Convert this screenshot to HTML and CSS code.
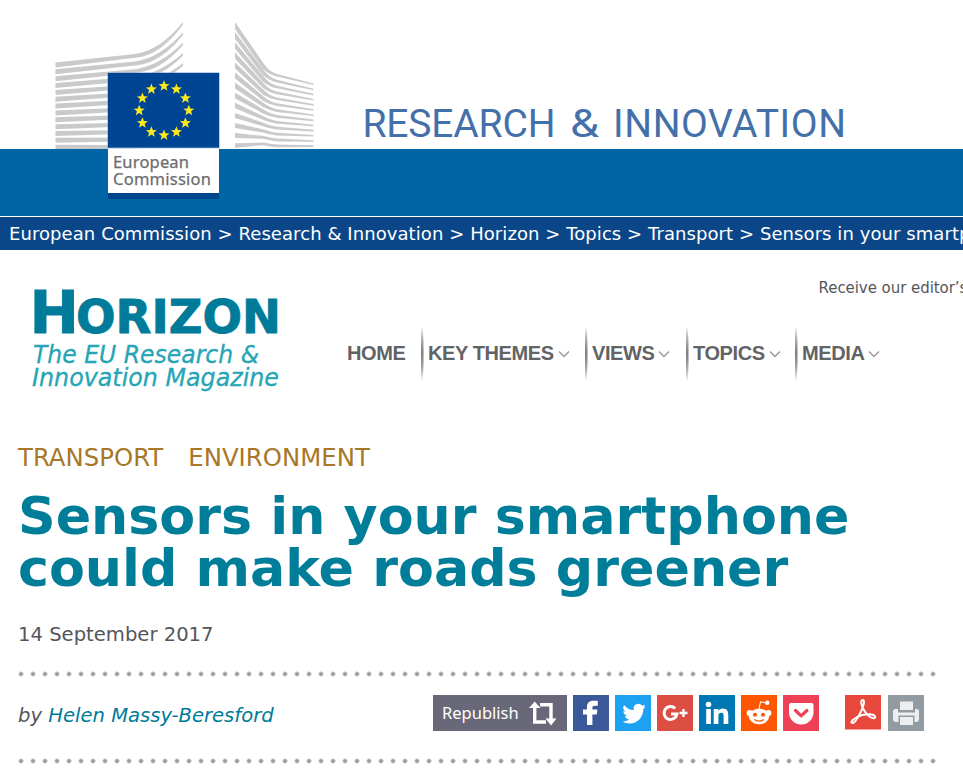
FILE: index.html
```html
<!DOCTYPE html>
<html lang="en">
<head>
<meta charset="utf-8">
<title>Sensors in your smartphone could make roads greener | Horizon</title>
<link rel="stylesheet" href="styles.css">
</head>
<body>
<header class="banner">
  <svg class="banner-art" width="963" height="216" viewBox="0 0 963 216">
    <defs><path id="star" d="M0-5.800 1.500-1.900 5.500-1.800 2.300.8 3.400 4.700 0 2.400-3.400 4.700-2.300.8-5.500-1.800-1.500-1.900Z"/></defs>
    <g id="building" fill="#c9cacb"></g>
    <rect y="149" width="963" height="67" fill="#0065a4"/>
    <rect x="108" y="180" width="111" height="19" fill="#00468f"/>
    <rect x="107.500" y="72.500" width="112" height="76" fill="#7f9fcb"/>
    <rect x="108" y="73" width="111" height="74.500" fill="#004494"/>
    <rect x="108" y="148.500" width="111" height="44.500" fill="#fff"/>
    <g fill="#fbe91c">
      <use href="#star" x="164" y="86"/><use href="#star" x="176.400" y="89.200"/><use href="#star" x="185.400" y="98.200"/>
      <use href="#star" x="188.800" y="110.500"/><use href="#star" x="185.400" y="123"/><use href="#star" x="176.400" y="132"/>
      <use href="#star" x="164" y="135.200"/><use href="#star" x="151.400" y="132"/><use href="#star" x="142.400" y="123"/>
      <use href="#star" x="139.200" y="110.500"/><use href="#star" x="142.400" y="98.200"/><use href="#star" x="151.400" y="89.200"/>
    </g>
    <g class="ec-name">
      <text x="113" y="168" textLength="76">European</text>
      <text x="113" y="184.500" textLength="98">Commission</text>
    </g>
    <g class="dg-name">
      <text x="362.500" y="136.500" textLength="193">RESEARCH</text>
      <text x="570" y="136.500" textLength="29" lengthAdjust="spacingAndGlyphs">&amp;</text>
      <text x="613" y="136.500" textLength="233">INNOVATION</text>
    </g>
  </svg>
</header>
<nav class="crumbs">European Commission &gt; Research &amp; Innovation &gt; Horizon &gt; Topics &gt; Transport &gt; Sensors in your smartphone</nav>
<section class="masthead">
  <svg class="logo" width="290" height="120" viewBox="0 0 290 120">
    <g class="logo-title"><text x="29.500" y="68" class="big">H</text><text x="76" y="68" textLength="205" lengthAdjust="spacingAndGlyphs">ORIZON</text></g>
    <g class="logo-sub">
      <text x="33" y="98" textLength="226" lengthAdjust="spacingAndGlyphs">The EU Research &amp;</text>
      <text x="32" y="121" textLength="247" lengthAdjust="spacingAndGlyphs">Innovation Magazine</text>
    </g>
  </svg>
  <div class="masthead-right">
    <p class="newsletter">Receive our editor’s</p>
    <ul class="menu">
      <li class="home">HOME</li>
      <li class="themes">KEY THEMES<svg class="chev" viewBox="0 0 12 8"><path d="M1 1.500 6 6.500 11 1.500"/></svg></li>
      <li class="views">VIEWS<svg class="chev" viewBox="0 0 12 8"><path d="M1 1.500 6 6.500 11 1.500"/></svg></li>
      <li class="topics">TOPICS<svg class="chev" viewBox="0 0 12 8"><path d="M1 1.500 6 6.500 11 1.500"/></svg></li>
      <li>MEDIA<svg class="chev" viewBox="0 0 12 8"><path d="M1 1.500 6 6.500 11 1.500"/></svg></li>
    </ul>
  </div>
</section>
<main class="article">
  <div class="tags"><span>TRANSPORT</span><span>ENVIRONMENT</span></div>
  <h1>Sensors in your smartphone<br>could make roads greener</h1>
  <p class="date">14 September 2017</p>
  <div class="dots"></div>
  <div class="byline">
    <p class="author">by <a>Helen Massy-Beresford</a></p>
    <div class="share">
      <div class="republish"><span>Republish</span>
        <svg width="28" height="25" viewBox="0 0 28 25"><g fill="none" stroke="#fff" stroke-width="3.400"><path d="M5.700 6V21H17"/><path d="M11 3.700H22V19"/></g><path fill="#fff" d="M0 7 5.700.500 11.500 7ZM16.500 17.500H27.500L22 24.500Z"/></svg>
      </div>
      <svg class="tile" viewBox="0 0 36 36"><path fill="#3b5998" d="M0 0h36v36H0z"/><path fill="#fff" d="M14 30V19.500h-4V14.500h4v-2.800C14 8 16.300 5.800 20 5.800h4.800v5h-3c-1.800 0-2.400.7-2.400 2.200v1.500h5l-.6 5h-4.400V30z"/></svg>
      <svg class="tile" viewBox="0 0 36 36"><path fill="#1da1f2" d="M0 0h36v36H0z"/><path fill="#fff" transform="translate(7.200 6.500) scale(.97 1)" d="M24.200 4.800c-.9.400-1.800.6-2.800.8 1-.6 1.800-1.600 2.200-2.700-1 .5-2 1-3.100 1.200A4.900 4.900 0 0 0 12 8.600C7.900 8.400 4.300 6.400 1.900 3.400a5 5 0 0 0 1.500 6.600c-.8 0-1.600-.3-2.200-.6 0 2.300 1.600 4.400 3.900 4.900-.7.200-1.500.2-2.200.1a4.900 4.900 0 0 0 4.600 3.400A10 10 0 0 1 .2 19.800c2.200 1.400 4.800 2.200 7.500 2.200 9.100 0 14.300-7.700 14-14.600 1-.7 1.800-1.600 2.500-2.600z"/></svg>
      <svg class="tile" viewBox="0 0 36 36"><path fill="#dc4e41" d="M0 0h36v36H0z"/><path fill="none" stroke="#fff" stroke-width="2.900" d="M18.200 13.400A6.500 6.500 0 1 0 20 19H14"/><path stroke="#fff" stroke-width="2.300" d="M22.500 18h8M26.500 14v8"/></svg>
      <svg class="tile" viewBox="0 0 36 36"><path fill="#0077b5" d="M0 0h36v36H0z"/><circle cx="9.500" cy="9.500" r="2.800" fill="#fff"/><path fill="#fff" d="M7.200 14h4.700v15H7.200zM14.700 14h4.500v2.100c.8-1.500 2.400-2.500 4.600-2.500 4.400 0 5.500 2.800 5.500 7V29h-4.700v-7.500c0-2 0-3.800-2.400-3.800s-2.800 1.700-2.800 3.700V29h-4.700z"/></svg>
      <svg class="tile" viewBox="0 0 36 36"><path fill="#ff5700" d="M0 0h36v36H0z"/><g fill="#fff"><ellipse cx="18" cy="21.500" rx="10.200" ry="7.700"/><circle cx="8.600" cy="18" r="3"/><circle cx="27.400" cy="18" r="3"/><circle cx="26.200" cy="7.700" r="2.300"/></g><path d="m18 14 1.500-7.200 5 1" fill="none" stroke="#fff" stroke-width="1.100"/><circle cx="14" cy="19.700" r="2" fill="#ff5700"/><circle cx="22" cy="19.700" r="2" fill="#ff5700"/><path d="M13.200 24.500q4.800 3.200 9.600 0" fill="none" stroke="#ff5700" stroke-width="1.300"/></svg>
      <svg class="tile" viewBox="0 0 36 36"><path fill="#ee4056" d="M0 0h36v36H0z"/><path fill="#fff" d="M8 8h20.500c1.300 0 2 .8 2 2v7.300a12.200 12.200 0 0 1-24.500 0V10c0-1.200.8-2 2-2z"/><path d="m12.500 15.500 5.700 5.300 5.700-5.300" fill="none" stroke="#ee4056" stroke-width="3.200" stroke-linecap="round" stroke-linejoin="round"/></svg>
      <svg class="tile pdf" viewBox="0 0 36 36"><path fill="#e9493c" d="M0 0h36v34H0z"/><path fill="#f3a39c" d="M0 34h36v1H0z"/><path d="M17.800 5c-2.800 0-1.400 5.500.8 9.500 2.200 4 6.500 8.800 9.700 8.800 3.500 0 2.300-4-4-4-5.500 0-10 1.500-13 3.200-3.300 1.800-5.600 4-4.600 5.200 1.600 1.800 5.200-3.200 8.300-9.200C18.500 12 20.400 5 17.800 5z" fill="none" stroke="#fff" stroke-width="2"/></svg>
      <svg class="tile print" viewBox="0 0 36 36"><path fill="#929ba1" d="M0 0h36v36H0z"/><g fill="#eceeef"><path d="M12 6.500h13v8.500H12zM5 16.500q0-2.500 2.500-2.500h2.500V17.500h17V14h1.500q2.500 0 2.500 2.500V24q0 3-3 3h-1.500v-6.500h-16V27H8q-3 0-3-3z"/><path d="M12 22h13v8H12z"/></g></svg>
    </div>
  </div>
  <div class="dots"></div>
</main>
<script src="building.js"></script>
</body>
</html>
```
FILE: building.js
```js
// Sweeping facade lines on both sides of the flag.
const building = document.getElementById('building');
function band(d) {
  const path = document.createElementNS('http://www.w3.org/2000/svg', 'path');
  path.setAttribute('d', d);
  building.appendChild(path);
}
for (let i = 0; i < 13; i++) {
  const l = 62.5 + i * 6.85, m = 54 + i * 7.6, r = 22 + i * 10.3;
  band(`M55.500 ${l}L${135} ${m}Q160 ${m - 3.5} 183 ${r}V${r + 2.6}Q161 ${m + 1} 137 ${m + 3.6}L55.500 ${l + 5}Z`);
}
for (let i = 0; i < 13; i++) {
  const l = 22 + i * 10.1, k = 71 + i * 6.05, r = 83.5 + i * 5.15;
  band(`M235 ${l}L264 ${k - 7 + i * 0.5}Q270 ${k + 1 - i * 0.05} 277 ${k + 3 - i * 0.18}L313.500 ${r}V${r + 1.6}L277 ${k + 5.5 - i * 0.15}Q270 ${k + 4.2 - i * 0.1} 263 ${k - 2 + i * 0.3}L235 ${l + 7 - i * 0.2}Z`);
}
```
FILE: styles.css
```css
* { box-sizing: border-box; }
body { margin: 0; background: #fff; overflow: hidden; font-family: "DejaVu Sans", Verdana, sans-serif; color: #55565a; }
p, h1, ul { margin: 0; padding: 0; }
svg { display: block; flex: none; }

.banner { height: 216px; }
.ec-name { font: 16.500px "Noto Sans", sans-serif; fill: #6b6c6e; stroke: #6b6c6e; stroke-width: .25px; }
.dg-name { font: 39px Roboto, sans-serif; fill: #4470aa; }

.crumbs { height: 33px; margin-top: 1px; padding-left: 9px; overflow: hidden; background: #0b4788; color: #fff; font-size: 18px; line-height: 33px; letter-spacing: .075px; white-space: nowrap; }

.masthead { display: flex; height: 191px; }
.logo { margin-top: 15px; overflow: visible; }
.logo-title { font-size: 47px; font-weight: bold; fill: #007b99; stroke: #007b99; stroke-width: .9px; }
.logo-title .big { font-size: 59px; }
.logo-sub { font-size: 25px; font-style: italic; fill: #25a5b5; stroke: #25a5b5; stroke-width: .3px; }
.masthead-right { flex: 1; min-width: 0; overflow: hidden; }
.newsletter { margin: 28px 0 0 528.500px; font-size: 15px; line-height: 20px; letter-spacing: -.05px; white-space: nowrap; }
.menu { display: flex; list-style: none; height: 54px; margin: 29px 0 0 57px; font: bold 20px/51px "Liberation Sans", Arial, sans-serif; letter-spacing: -.4px; color: #626365; white-space: nowrap; }
.menu li { display: flex; align-items: center; height: 54px; padding-bottom: 1px; }
.menu li + li { padding-left: 7px; background: radial-gradient(ellipse 2.200px 28px at 1px 50%, #686868, #8889 65%, #fff0) no-repeat; }
.menu .home { width: 74px; }
.menu .themes { width: 164px; }
.menu .views { width: 101px; }
.menu .topics { width: 109px; }
.chev { width: 12px; height: 8px; margin: 0 0 0 4px; fill: none; stroke: #999; stroke-width: 1.400; }

.article { padding: 0 18px; }
.tags { display: flex; gap: 25px; height: 34px; color: #a87727; font-size: 24.400px; line-height: 34px; }
h1 { margin-top: 15px; color: #007e99; font-size: 52.250px; line-height: 52px; white-space: nowrap; }
.date { margin-top: 28px; font-size: 19.600px; line-height: 26px; }
.dots { width: 920px; height: 6px; background: radial-gradient(circle at 3px 3px, #999 1.200px, #9990 3px) 0 0 / 12px 6px; }
.date + .dots { margin-top: 23px; }
.byline { display: flex; justify-content: space-between; align-items: center; width: 906px; height: 36px; margin: 18px 0 27px; }
.author { padding-top: 4px; font-size: 19.600px; font-style: italic; }
.author a { color: #007b99; }
.share { display: flex; gap: 6px; }
.tile { width: 36px; height: 36px; }
.pdf { margin-left: 20px; }
.print { margin-left: 1px; }
.republish { display: flex; align-items: center; justify-content: space-between; width: 134px; height: 36px; padding: 0 10px 0 9px; background: #696878; color: #fff; font: 16.500px "Noto Sans", sans-serif; }
.republish span { margin-top: -1px; }
```
